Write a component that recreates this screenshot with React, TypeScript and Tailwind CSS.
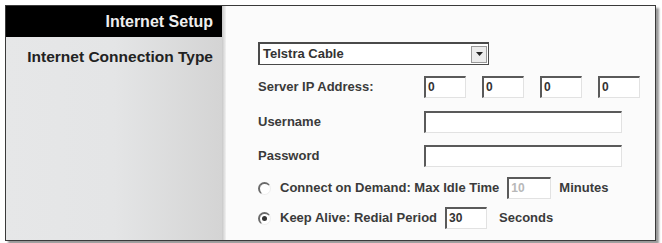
const font = { fontFamily: '"Liberation Sans", Arial, sans-serif' };

const Box = ({ w, value, dim }: { w: string; value?: string; dim?: boolean }) => (
  <div
    className={`h-[22px] ${w} border-t-2 border-l-2 border-t-[#5a5a5a] border-l-[#5a5a5a] border-b border-r border-b-[#e2e2e2] border-r-[#e2e2e2] bg-white pl-[2px] text-[12px] leading-[18px] ${
      dim ? "text-[#b8b8b8]" : "text-[#333]"
    }`}
  >
    {value}
  </div>
);

const Radio = ({ checked }: { checked?: boolean }) => (
  <div className="relative w-[13px] h-[13px] rounded-full border-t-2 border-l-2 border-t-[#6a6a6a] border-l-[#6a6a6a] border-b border-r border-b-[#eee] border-r-[#eee] bg-white">
    {checked && <div className="absolute left-[2px] top-[2px] w-[5px] h-[5px] rounded-full bg-[#333]" />}
  </div>
);

export default function App() {
  return (
    <div className="w-[662px] h-[243px] bg-white" style={font}>
      <div className="relative left-[5px] top-[5px] w-[651px] h-[236px] border border-[#3a3a3a] flex shadow-[3px_3px_2px_#9a9a9a]">
        <div className="w-[216px] h-full bg-gradient-to-r from-[#e6e7e8] via-[#e4e5e6] to-[#d4d4d4] flex flex-col">
          <div className="h-[31px] bg-black text-[#eee] font-bold text-[16px] flex items-center justify-end pr-[9px]">
            Internet Setup
          </div>
          <div className="pt-[8px] pr-[9px] text-right font-bold text-[15.5px] text-[#222]">
            Internet Connection Type
          </div>
        </div>
        <div className="w-[4px] h-full bg-gradient-to-r from-[#c8c8c8] to-[#f2f2f2]" />
        <div className="flex-1 h-full bg-[#fbfbfb] pl-[32px] pt-[36px] text-[13px] font-bold text-[#3a3a3a]">
          <div className="w-[231px] h-[23px] border border-[#4a4a4a] border-t-2 border-l-2 bg-white flex items-center justify-between">
            <span className="pl-[3px] text-[#333]">Telstra Cable</span>
            <div className="w-[16px] h-[17px] mr-[1px] bg-[#ececec] border border-[#999] flex items-center justify-center">
              <svg width="7" height="4" viewBox="0 0 7 4">
                <path d="M0 0H7L3.5 4Z" fill="#222" />
              </svg>
            </div>
          </div>
          <div className="flex items-center h-[22px] mt-[11px]">
            <span className="w-[166px]">Server IP Address:</span>
            <div className="flex gap-[16px]">
              <Box w="w-[42px]" value="0" />
              <Box w="w-[42px]" value="0" />
              <Box w="w-[42px]" value="0" />
              <Box w="w-[42px]" value="0" />
            </div>
          </div>
          <div className="flex items-center h-[22px] mt-[13px]">
            <span className="w-[166px]">Username</span>
            <Box w="w-[198px]" />
          </div>
          <div className="flex items-center h-[22px] mt-[12px]">
            <span className="w-[166px]">Password</span>
            <Box w="w-[198px]" />
          </div>
          <div className="flex items-center h-[22px] mt-[10px]">
            <Radio />
            <span className="ml-[9px]">Connect on Demand: Max Idle Time</span>
            <div className="ml-[8px]">
              <Box w="w-[44px]" value="10" dim />
            </div>
            <span className="ml-[8px]">Minutes</span>
          </div>
          <div className="flex items-center h-[22px] mt-[8px]">
            <Radio checked />
            <span className="ml-[9px]">Keep Alive: Redial Period</span>
            <div className="ml-[8px]">
              <Box w="w-[42px]" value="30" />
            </div>
            <span className="ml-[12px]">Seconds</span>
          </div>
        </div>
      </div>
    </div>
  );
}
